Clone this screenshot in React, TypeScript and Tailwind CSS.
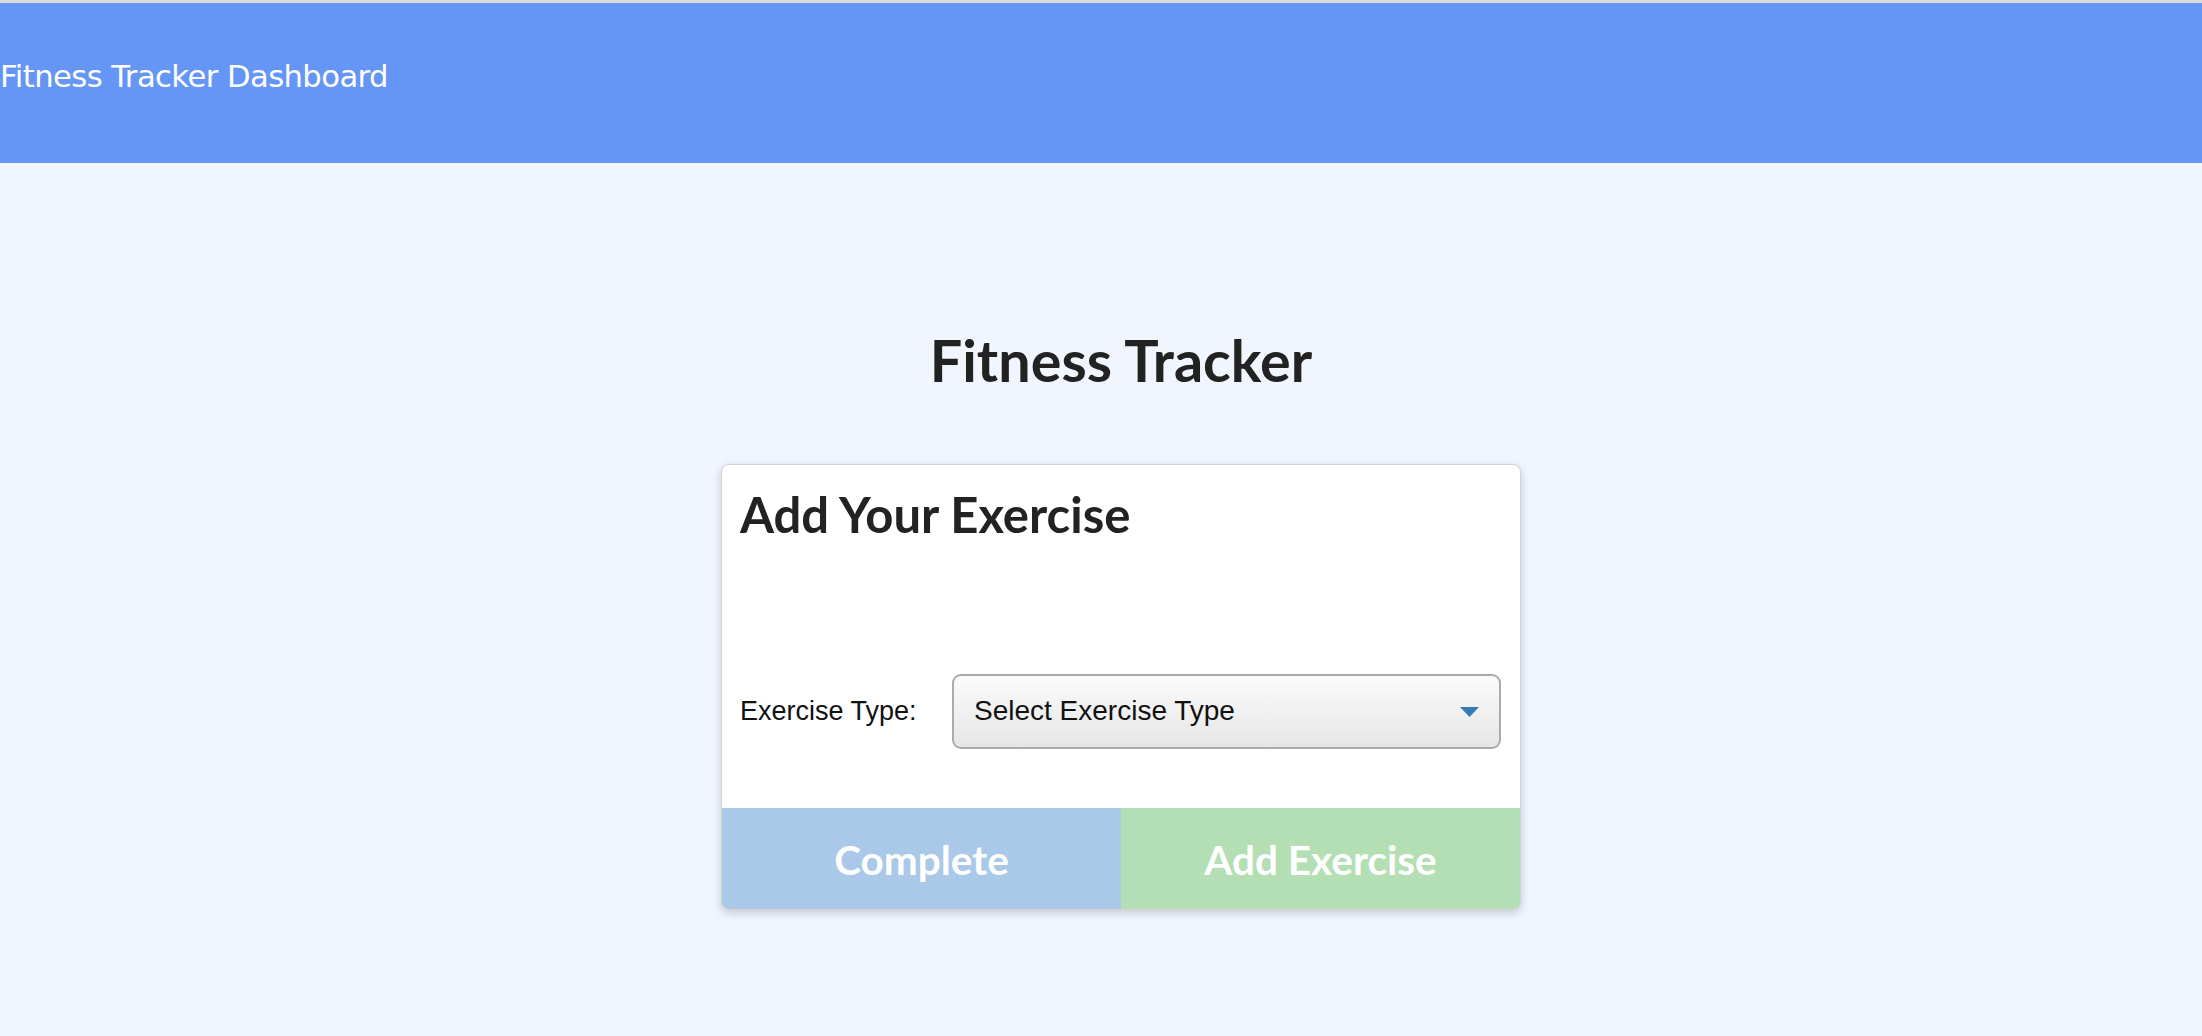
import React from "react";

export default function App() {
  return (
    <div className="min-h-[1036px] w-full bg-[#f1f6fe] border-t-[3px] border-[#d9d9dc]">
      <header className="h-[160px] bg-[#6595f5] pt-[59px]">
        <div
          className="text-white text-[30.7px] leading-none tracking-[-0.6px]"
          style={{ fontFamily: "'DejaVu Sans', Tahoma, sans-serif" }}
        >
          Fitness Tracker Dashboard
        </div>
      </header>
      <main
        className="pl-[40px] flex flex-col items-center"
        style={{ fontFamily: "Lato, 'Liberation Sans', sans-serif" }}
      >
        <h1 className="mt-[168px] text-[57.5px] leading-none font-bold text-[#222222]">
          Fitness Tracker
        </h1>
        <div className="mt-[75px] w-[800px] h-[446px] bg-white border border-[#d3d3d6] rounded-[8px] shadow-[0_3px_10px_rgba(0,0,0,0.18)] flex flex-col overflow-hidden">
          <h2 className="pt-[25px] pl-[18px] text-[49px] leading-none font-bold text-[#222222]">
            Add Your Exercise
          </h2>
          <div className="mt-[135px] flex items-center pl-[18px]">
            <label
              className="w-[212px] text-[27px] text-[#111111] leading-none"
              style={{ fontFamily: "'Liberation Sans', Arial, sans-serif" }}
            >
              Exercise Type:
            </label>
            <div className="relative w-[549px] h-[75px] rounded-[9px] border-2 border-[#ababab] bg-gradient-to-b from-[#fbfbfb] to-[#e6e6e6] flex items-center pl-[20px]">
              <span
                className="text-[28px] text-[#111111] leading-none"
                style={{ fontFamily: "'Liberation Sans', Arial, sans-serif" }}
              >
                Select Exercise Type
              </span>
              <svg
                className="absolute right-[20px] top-[31px]"
                width="19"
                height="10"
                viewBox="0 0 19 10"
              >
                <polygon points="0,0 19,0 9.5,10" fill="#337ab7" />
              </svg>
            </div>
          </div>
          <div className="mt-auto h-[101px] flex">
            <button className="flex-1 bg-[#aac8e8] text-white text-[40.5px] font-bold leading-none pt-[5px]">
              Complete
            </button>
            <button className="flex-1 bg-[#b4deb3] text-white text-[40.5px] font-bold leading-none pt-[5px]">
              Add Exercise
            </button>
          </div>
        </div>
      </main>
    </div>
  );
}
